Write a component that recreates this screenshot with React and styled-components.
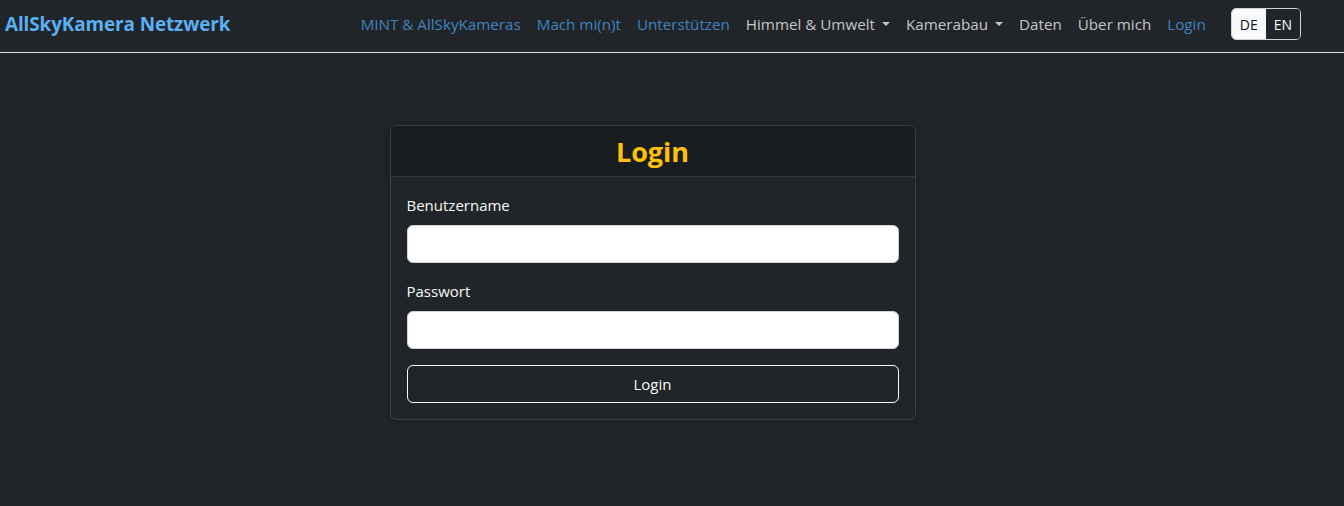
import React from "react";
import styled, { createGlobalStyle } from "styled-components";

const GlobalStyle = createGlobalStyle`
  html, body {
    margin: 0;
    padding: 0;
    background: #212529;
    color: #dee2e6;
    font-family: "Open Sans", "Noto Sans", sans-serif;
  }
  * { box-sizing: border-box; }
`;

const navItems = [
  { label: "MINT & AllSkyKameras", tone: "link" },
  { label: "Mach mi(n)t", tone: "link" },
  { label: "Unterstützen", tone: "link" },
  { label: "Himmel & Umwelt", tone: "plain", dropdown: true },
  { label: "Kamerabau", tone: "plain", dropdown: true },
  { label: "Daten", tone: "plain" },
  { label: "Über mich", tone: "plain" },
  { label: "Login", tone: "link" },
];

export default function App() {
  return (
    <>
      <GlobalStyle />
      <StyledNavbar>
        <StyledBrand href="#">AllSkyKamera Netzwerk</StyledBrand>
        <StyledNavList>
          {navItems.map((item) => (
            <StyledNavLink key={item.label} href="#" $tone={item.tone}>
              {item.label}
              {item.dropdown && <StyledCaret />}
            </StyledNavLink>
          ))}
        </StyledNavList>
        <StyledLangGroup>
          <StyledLangButton $active>DE</StyledLangButton>
          <StyledLangButton>EN</StyledLangButton>
        </StyledLangGroup>
      </StyledNavbar>

      <StyledMain>
        <StyledCard>
          <StyledCardHeader>Login</StyledCardHeader>
          <StyledCardBody>
            <StyledField>
              <StyledLabel htmlFor="username">Benutzername</StyledLabel>
              <StyledInput id="username" type="text" />
            </StyledField>
            <StyledField>
              <StyledLabel htmlFor="password">Passwort</StyledLabel>
              <StyledInput id="password" type="password" />
            </StyledField>
            <StyledSubmit type="button">Login</StyledSubmit>
          </StyledCardBody>
        </StyledCard>
      </StyledMain>
    </>
  );
}

const StyledNavbar = styled.nav`
  display: flex;
  align-items: center;
  height: 53px;
  padding: 0 43px 4px 5px;
  border-bottom: 1px solid #dee2e6;
  background: #212529;
`;

const StyledBrand = styled.a`
  font-size: 18.9px;
  font-weight: 700;
  color: #5ab0f5;
  text-decoration: none;
  letter-spacing: -0.1px;
`;

const StyledNavList = styled.div`
  display: flex;
  align-items: center;
  margin-left: auto;
`;

const StyledNavLink = styled.a`
  display: flex;
  align-items: center;
  padding: 8px 8px;
  font-size: 15.2px;
  text-decoration: none;
  color: ${(p) => (p.$tone === "link" ? "#4283bd" : "#c4c6c8")};
`;

const StyledCaret = styled.span`
  display: inline-block;
  margin-left: 7px;
  border-top: 4px solid currentColor;
  border-left: 4px solid transparent;
  border-right: 4px solid transparent;
`;

const StyledLangGroup = styled.div`
  display: flex;
  margin-left: 17px;
  border: 1px solid #ced4da;
  border-radius: 5px;
  overflow: hidden;
`;

const StyledLangButton = styled.button`
  height: 30px;
  padding: 0 8px;
  border: none;
  font-family: inherit;
  font-size: 14px;
  background: ${(p) => (p.$active ? "#f8f9fa" : "#212529")};
  color: ${(p) => (p.$active ? "#111" : "#f8f9fa")};
`;

const StyledMain = styled.main`
  display: flex;
  align-items: flex-start;
  justify-content: center;
  padding-top: 72px;
  padding-right: 39px;
  min-height: 453px;
`;

const StyledCard = styled.div`
  width: 526px;
  border: 1px solid rgba(255, 255, 255, 0.12);
  border-radius: 6px;
  background: #212529;
  box-shadow: 0 2px 8px rgba(0, 0, 0, 0.25);
  overflow: hidden;
`;

const StyledCardHeader = styled.h2`
  margin: 0;
  height: 51px;
  display: flex;
  align-items: center;
  justify-content: center;
  background: #1a1d20;
  border-bottom: 1px solid rgba(255, 255, 255, 0.12);
  color: #ffc107;
  font-size: 27px;
  font-weight: 700;
`;

const StyledCardBody = styled.div`
  display: flex;
  flex-direction: column;
  padding: 17px 16px 16px;
`;

const StyledField = styled.div`
  display: flex;
  flex-direction: column;
  gap: 8px;
  margin-bottom: 17px;

  & + & {
    margin-bottom: 16px;
  }
`;

const StyledLabel = styled.label`
  font-size: 15px;
  color: #f8f9fa;
  line-height: 23px;
`;

const StyledInput = styled.input`
  height: 38px;
  border: 1px solid #ced4da;
  border-radius: 6px;
  background: #fff;
  font-family: inherit;
  font-size: 15px;
  padding: 6px 12px;
  outline: none;
`;

const StyledSubmit = styled.button`
  height: 38px;
  border: 1px solid #f8f9fa;
  border-radius: 6px;
  background: transparent;
  color: #f8f9fa;
  font-family: inherit;
  font-size: 15px;
`;
